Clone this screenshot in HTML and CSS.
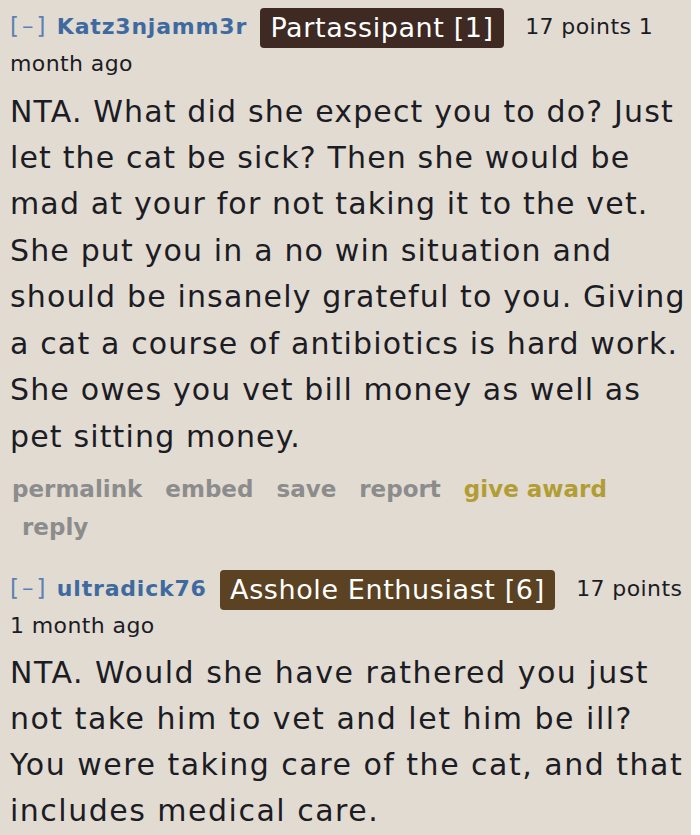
FILE: index.html
```html
<!DOCTYPE html>
<html>
<head>
<meta charset="utf-8">
<link rel="stylesheet" href="styles.css">
</head>
<body>
<div class="page">
  <div class="comment first">
    <div class="tagline">
      <span class="expand">[–]</span>
      <span class="author">Katz3njamm3r</span>
      <span class="flair flair-dark">Partassipant [1]</span>
      <span class="score">17 points 1 month ago</span>
    </div>
    <div class="body">NTA. What did she expect you to do? Just let the cat be sick? Then she would be mad at your for not taking it to the vet. She put you in a no win situation and should be insanely grateful to you. Giving a cat a course of antibiotics is hard work. She owes you vet bill money as well as pet sitting money.</div>
    <ul class="buttons">
      <li>permalink</li>
      <li>embed</li>
      <li>save</li>
      <li>report</li>
      <li class="award">give award</li>
      <li class="reply">reply</li>
    </ul>
  </div>
  <div class="comment second">
    <div class="tagline">
      <span class="expand">[–]</span>
      <span class="author">ultradick76</span>
      <span class="flair flair-brown">Asshole Enthusiast [6]</span>
      <span class="score">17 points 1 month ago</span>
    </div>
    <div class="body">NTA. Would she have rathered you just not take him to vet and let him be ill? You were taking care of the cat, and that includes medical care.</div>
  </div>
</div>
</body>
</html>
```
FILE: styles.css
```css
html, body {
  margin: 0;
  padding: 0;
  background: #ffffff;
}
.page {
  width: 691px;
  min-height: 835px;
  background: #e2dbd2;
  box-sizing: border-box;
  padding: 0 0 0 10px;
  font-family: "DejaVu Sans", Verdana, sans-serif;
  color: #1c1c24;
  overflow: hidden;
}
.comment {
  display: flex;
  flex-direction: column;
}
.tagline {
  font-size: 22px;
  letter-spacing: 0.4px;
  line-height: 35.5px;
  padding-top: 9px;
}
.expand {
  color: #5a82b4;
  font-size: 23px;
  letter-spacing: 3px;
  margin-right: 1px;
}
.author {
  color: #3f6a9f;
  font-weight: bold;
  letter-spacing: 0.8px;
  margin-right: 6px;
}
.flair {
  display: inline-block;
  color: #ffffff;
  font-size: 27px;
  letter-spacing: 0.6px;
  line-height: 40px;
  padding: 0 10px;
  border-radius: 4px;
  margin: -2px 14px -2px 0;
  vertical-align: middle;
}
.flair-dark {
  background: #3e2a22;
}
.flair-brown {
  background: #5a4222;
}
.body {
  font-size: 30px;
  letter-spacing: 1.15px;
  line-height: 46.45px;
  margin-top: 7px;
}
.buttons {
  list-style: none;
  margin: 10px 0 0 0;
  padding: 0;
  display: flex;
  flex-wrap: wrap;
  column-gap: 23px;
  font-size: 23px;
  font-weight: bold;
  line-height: 38px;
  color: #8c8c8c;
}
.buttons li:first-child {
  margin-left: 2px;
}
.buttons .award {
  color: #b29d35;
}
.buttons .reply {
  flex-basis: 100%;
  padding-left: 12px;
}
.second {
  margin-top: 15px;
}
.second .tagline {
  line-height: 36px;
}
.second .body {
  letter-spacing: 1.5px;
  line-height: 46px;
  margin-top: 6px;
}
```
